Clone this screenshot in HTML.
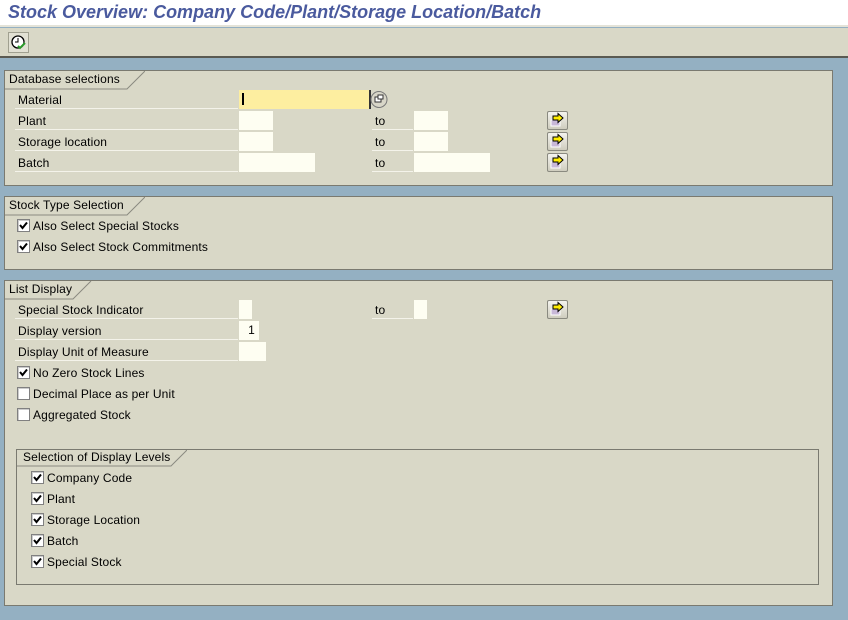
<!DOCTYPE html>
<html><head><meta charset="utf-8">
<style>
*{margin:0;padding:0;box-sizing:border-box}
body{width:848px;height:620px;overflow:hidden;background:#94b0c2;font-family:"Liberation Sans",Arial,sans-serif;font-size:12px;letter-spacing:0.15px;color:#000;position:relative}
.a{position:absolute}
.hdr{left:0;top:0;width:848px;height:27px;background:#fff;border-bottom:2px solid #e4e3d8}
.hdr span{position:absolute;left:8px;top:2px;font-size:18px;font-weight:bold;font-style:italic;color:#4a5a9e;letter-spacing:0}
.tb{left:0;top:28px;width:848px;height:30px;background:#d9d8c7;border-bottom:2px solid #5a5a52}
.panel{background:#d9d8c7;border:1px solid #7a7a70}
.lbl{height:19px;border-bottom:1px solid #f4f3ea;padding-left:3px;line-height:20px}
.inp{background:#fefef2;height:19px}
.btn{width:21px;height:19px;background:linear-gradient(#f4f3ee,#cfcdbe);border:1px solid #8a8a80;border-radius:2px}
.cb{width:13px;height:13px;border:1px solid #808080;background:#fff;box-shadow:inset 1px 1px 0 #ccc}
.cbt{line-height:14px}
</style></head><body>
<div class="a hdr"><span>Stock Overview: Company Code/Plant/Storage Location/Batch</span></div>
<div class="a tb"></div>
<div class="a" style="left:8px;top:32px;width:21px;height:21px;border:1px solid #a0a090;background:#e2e1d4">
<svg width="19" height="19"><circle cx="9" cy="9" r="6" fill="#fff" stroke="#000" stroke-width="1.3"/><path d="M9 5v4h-3" stroke="#000" fill="none"/><path d="M9 13l2 2 5-5" stroke="#2a9a2a" stroke-width="2" fill="none"/></svg></div>

<div class="a panel" style="left:4px;top:70px;width:829px;height:116px"></div>
<svg class="a" style="left:5px;top:71px" width="140" height="19"><path d="M0 0H140L122 18H0Z" fill="#d9d8c7"/><path d="M140 0L122 18H0" stroke="#8a8a80" fill="none"/></svg>
<div class="a" style="left:9px;top:72px">Database selections</div>
<div class="a lbl" style="left:15px;top:90px;width:223px">Material</div>
<div class="a" style="left:239px;top:90px;width:132px;height:19px;background:#fdeea0;border-right:2px solid #333"></div>
<div class="a" style="left:242px;top:93px;width:2px;height:12px;background:#000"></div>
<svg class="a" style="left:370px;top:90px" width="18" height="19"><circle cx="9" cy="9.5" r="8" fill="#d8d6c8" stroke="#777"/><rect x="5" y="7" width="6" height="5" fill="#fff" stroke="#333"/><rect x="8" y="5" width="5" height="4" fill="#fff" stroke="#333"/></svg>

<div class="a lbl" style="left:15px;top:111px;width:223px">Plant</div>
<div class="a inp" style="left:239px;top:111px;width:34px"></div>
<div class="a lbl" style="left:372px;top:111px;width:41px">to</div>
<div class="a inp" style="left:414px;top:111px;width:34px"></div>
<div class="a lbl" style="left:15px;top:132px;width:223px">Storage location</div>
<div class="a inp" style="left:239px;top:132px;width:34px"></div>
<div class="a lbl" style="left:372px;top:132px;width:41px">to</div>
<div class="a inp" style="left:414px;top:132px;width:34px"></div>
<div class="a lbl" style="left:15px;top:153px;width:223px">Batch</div>
<div class="a inp" style="left:239px;top:153px;width:76px"></div>
<div class="a lbl" style="left:372px;top:153px;width:41px">to</div>
<div class="a inp" style="left:414px;top:153px;width:76px"></div>

<div class="a panel" style="left:4px;top:196px;width:829px;height:74px"></div>
<svg class="a" style="left:5px;top:197px" width="140" height="19"><path d="M0 0H140L122 18H0Z" fill="#d9d8c7"/><path d="M140 0L122 18H0" stroke="#8a8a80" fill="none"/></svg>
<div class="a" style="left:9px;top:198px">Stock Type Selection</div>
<div class="a cb" style="left:17px;top:219px"></div><div class="a cbt" style="left:33px;top:219px">Also Select Special Stocks</div>
<div class="a cb" style="left:17px;top:240px"></div><div class="a cbt" style="left:33px;top:240px">Also Select Stock Commitments</div>

<div class="a panel" style="left:4px;top:280px;width:829px;height:326px"></div>
<svg class="a" style="left:5px;top:281px" width="90" height="19"><path d="M0 0H86L68 18H0Z" fill="#d9d8c7"/><path d="M86 0L68 18H0" stroke="#8a8a80" fill="none"/></svg>
<div class="a" style="left:9px;top:282px">List Display</div>
<div class="a lbl" style="left:15px;top:300px;width:223px">Special Stock Indicator</div>
<div class="a inp" style="left:239px;top:300px;width:13px"></div>
<div class="a lbl" style="left:372px;top:300px;width:41px">to</div>
<div class="a inp" style="left:414px;top:300px;width:13px"></div>
<div class="a lbl" style="left:15px;top:321px;width:223px">Display version</div>
<div class="a inp" style="left:239px;top:321px;width:20px;text-align:right;padding-right:4px;line-height:19px">1</div>
<div class="a lbl" style="left:15px;top:342px;width:223px">Display Unit of Measure</div>
<div class="a inp" style="left:239px;top:342px;width:27px"></div>
<div class="a cb" style="left:17px;top:366px"></div><div class="a cbt" style="left:33px;top:366px">No Zero Stock Lines</div>
<div class="a cb" style="left:17px;top:387px"></div><div class="a cbt" style="left:33px;top:387px">Decimal Place as per Unit</div>
<div class="a cb" style="left:17px;top:408px"></div><div class="a cbt" style="left:33px;top:408px">Aggregated Stock</div>

<div class="a" style="left:16px;top:449px;width:803px;height:136px;border:1px solid #7a7a70"></div>
<svg class="a" style="left:17px;top:450px" width="170" height="17"><path d="M0 0H170L154 16H0Z" fill="#d9d8c7"/><path d="M170 0L154 16H0" stroke="#8a8a80" fill="none"/></svg>
<div class="a" style="left:23px;top:450px">Selection of Display Levels</div>
<div class="a cb" style="left:31px;top:471px"></div><div class="a cbt" style="left:47px;top:471px">Company Code</div>
<div class="a cb" style="left:31px;top:492px"></div><div class="a cbt" style="left:47px;top:492px">Plant</div>
<div class="a cb" style="left:31px;top:513px"></div><div class="a cbt" style="left:47px;top:513px">Storage Location</div>
<div class="a cb" style="left:31px;top:534px"></div><div class="a cbt" style="left:47px;top:534px">Batch</div>
<div class="a cb" style="left:31px;top:555px"></div><div class="a cbt" style="left:47px;top:555px">Special Stock</div>

<script>
var chk=[[17,219],[17,240],[17,366],[31,471],[31,492],[31,513],[31,534],[31,555]];
chk.forEach(function(p){document.body.insertAdjacentHTML('beforeend','<svg class="a" style="left:'+p[0]+'px;top:'+p[1]+'px" width="13" height="13"><path d="M3 6l2.5 3L10 3.5" stroke="#000" stroke-width="2" fill="none"/></svg>');});
[111,132,153,300].forEach(function(y){document.body.insertAdjacentHTML('beforeend','<div class="a btn" style="left:547px;top:'+y+'px"><svg width="19" height="17" style="display:block"><rect x="3" y="8" width="9" height="6" fill="#c8b8d8" stroke="#fff"/><path d="M5 4h5V1.5L15 6l-5 4.5V8H5Z" fill="#ffee00" stroke="#000"/></svg></div>');});
</script>
</body></html>
